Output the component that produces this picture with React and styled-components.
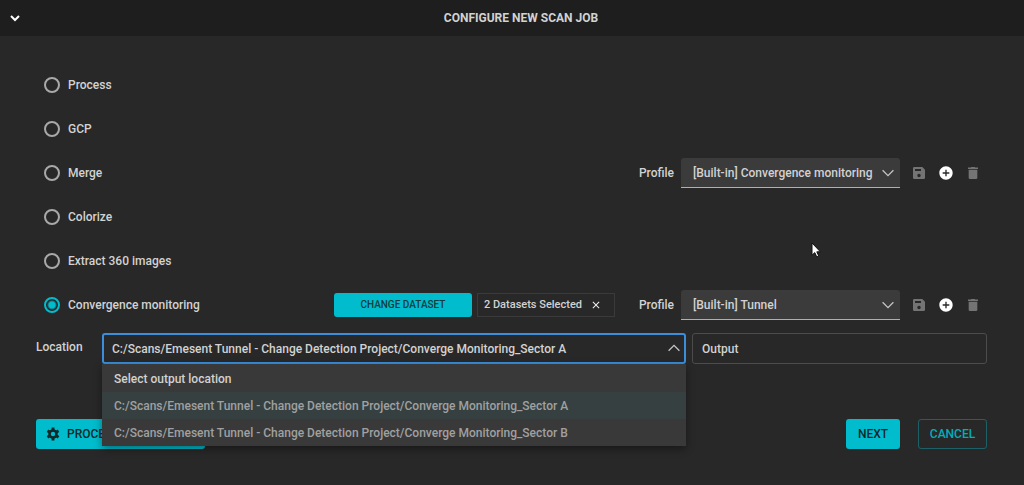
import React, { useState } from "react";
import styled, { createGlobalStyle } from "styled-components";
import { MdAddCircle, MdClose } from "react-icons/md";

const locations = [
	"Select output location",
	"C:/Scans/Emesent Tunnel - Change Detection Project/Converge Monitoring_Sector A",
	"C:/Scans/Emesent Tunnel - Change Detection Project/Converge Monitoring_Sector B",
];

const jobs = [
	{ id: "process", name: "Process" },
	{ id: "gcp", name: "GCP" },
	{ id: "merge", name: "Merge", profile: "[Built-in] Convergence monitoring" },
	{ id: "colorize", name: "Colorize" },
	{ id: "extract", name: "Extract 360 images" },
	{ id: "convergence", name: "Convergence monitoring", profile: "[Built-in] Tunnel", datasets: 2 },
];

const Chevron = ({ up }) => (
	<Arrow viewBox="0 0 12 8" aria-hidden="true">
		<path d={up ? "M.6 6.8 6 1.4l5.4 5.4" : "M.6 1.2 6 6.6l5.4-5.4"} />
	</Arrow>
);

const SaveIcon = () => (
	<svg viewBox="0 0 24 24" width="16" height="16" fill="currentColor">
		<path
			fillRule="evenodd"
			d="M17 3H5a2 2 0 0 0-2 2v14a2 2 0 0 0 2 2h14a2 2 0 0 0 2-2V7zM12 18.5a2.6 2.6 0 1 1 0-5.2 2.6 2.6 0 0 1 0 5.2zM15 9H6V6h9z"
		/>
	</svg>
);

const TrashIcon = () => (
	<svg viewBox="0 0 24 24" width="16" height="16" fill="currentColor">
		<path d="M5.5 19a2 2 0 0 0 2 2h9a2 2 0 0 0 2-2V7h-13zM19.5 3.8h-4L14.5 3h-5l-1 .8h-4V6h15z" />
	</svg>
);

const GearIcon = () => (
	<svg viewBox="0 0 24 24" width="14" height="14" fill="none" stroke="currentColor">
		<circle cx="12" cy="12" r="6" strokeWidth="4.4" />
		{[0, 60, 120].map((angle) => (
			<path
				key={angle}
				d="M12 1v4M12 19v4"
				strokeWidth="5"
				transform={`rotate(${angle} 12 12)`}
			/>
		))}
	</svg>
);

const Profile = ({ id, value }) => (
	<ProfileGroup>
		<label htmlFor={`profile-${id}`}>Profile</label>
		<SelectBox>
			<ProfileSelect id={`profile-${id}`} defaultValue={value}>
				<option>{value}</option>
			</ProfileSelect>
			<Chevron />
		</SelectBox>
		<Tools>
			<IconButton aria-label="Save profile" disabled><SaveIcon /></IconButton>
			<IconButton aria-label="Add profile"><MdAddCircle /></IconButton>
			<IconButton aria-label="Delete profile" disabled><TrashIcon /></IconButton>
		</Tools>
	</ProfileGroup>
);

const App = () => {
	const [job, setJob] = useState("convergence");
	const [location, setLocation] = useState(locations[1]);

	return (
		<>
			<GlobalStyle />
			<Header>
				<Collapse aria-label="Collapse">
					<svg viewBox="0 0 10 7" width="10" height="7">
						<path d="M1 1l4 4 4-4" fill="none" stroke="#fff" strokeWidth="2" />
					</svg>
				</Collapse>
				<h1>CONFIGURE NEW SCAN JOB</h1>
			</Header>
			<Content>
				{jobs.map((item) => (
					<Row key={item.id}>
						<RadioLabel>
							<Radio
								type="radio"
								name="job"
								checked={job === item.id}
								onChange={() => setJob(item.id)}
							/>
							{item.name}
						</RadioLabel>
						{item.datasets && (
							<Datasets>
								<DatasetButton>CHANGE DATASET</DatasetButton>
								<Chip>
									{item.datasets} Datasets Selected
									<ClearButton aria-label="Clear datasets"><MdClose /></ClearButton>
								</Chip>
							</Datasets>
						)}
						{item.profile && <Profile id={item.id} value={item.profile} />}
					</Row>
				))}
				<LocationRow>
					<LocationLabel htmlFor="location">Location</LocationLabel>
					<LocationBox>
						<LocationSelect
							id="location"
							value={location}
							onChange={(e) => setLocation(e.target.value)}
						>
							{locations.map((path) => <option key={path}>{path}</option>)}
						</LocationSelect>
						<Chevron up />
						<Menu role="listbox">
							{locations.map((path, i) => (
								<MenuItem
									key={path}
									role="option"
									aria-selected={path === location}
									$heading={i === 0}
									$active={path === location}
									onClick={() => setLocation(path)}
								>
									{path}
								</MenuItem>
							))}
						</Menu>
					</LocationBox>
					<Output aria-label="Output" placeholder="Output" />
				</LocationRow>
				<Footer>
					<SettingsButton><GearIcon />PROCESSING SETTINGS</SettingsButton>
					<NextButton>NEXT</NextButton>
					<CancelButton>CANCEL</CancelButton>
				</Footer>
			</Content>
			<Pointer viewBox="0 0 10 16" aria-hidden="true">
				<path
					d="M1 1v12.2l2.8-2.6 1.9 4.2 2-.9-1.9-4.1H9.4z"
					fill="#fff"
					stroke="#111"
					strokeWidth="1"
				/>
			</Pointer>
		</>
	);
};

export default App;

const GlobalStyle = createGlobalStyle`
* {
	box-sizing: border-box;
}
body {
	margin: 0;
	background: #282828;
	color: #d2d2d2;
	font: 500 12px/20px Roboto, "Liberation Sans", sans-serif;
}
button, input, select {
	font: inherit;
	color: inherit;
	margin: 0;
}
button {
	padding: 0;
	border: none;
	background: none;
	white-space: nowrap;
}
`;

const Header = styled.header`
	display: grid;
	grid-template-columns: 30px 1fr 12px;
	align-items: center;
	height: 36px;
	background: #1e1e1e;
	h1 {
		margin: 0;
		font-size: 12px;
		font-weight: 700;
		text-align: center;
	}
`;

const Collapse = styled.button`
	display: flex;
	justify-content: center;
`;

const Content = styled.main`
	padding: 27px 37px 36px 36px;
`;

const Row = styled.div`
	display: flex;
	align-items: center;
	height: 44px;
	padding-left: 8px;
`;

const RadioLabel = styled.label`
	display: flex;
	align-items: center;
	gap: 8px;
	margin-right: auto;
`;

const Radio = styled.input`
	appearance: none;
	width: 16px;
	height: 16px;
	margin: 0;
	border: 2px solid #a9a9a9;
	border-radius: 50%;
	&:checked {
		border-color: #00bccd;
		background: radial-gradient(circle, #00bccd 3px, transparent 5px);
	}
`;

const Datasets = styled.div`
	display: flex;
	gap: 5px;
	margin-right: 24px;
	font-size: 11px;
`;

const DatasetButton = styled.button`
	width: 138px;
	height: 24px;
	border-radius: 3px;
	background: #00bccd;
	color: #123c40;
	font-size: 10px;
`;

const Chip = styled.div`
	display: flex;
	align-items: center;
	justify-content: space-between;
	width: 138px;
	height: 24px;
	padding: 0 12px 0 6px;
	border: 1px solid #3a3a3a;
	white-space: nowrap;
`;

const ClearButton = styled.button`
	display: flex;
	font-size: 12px;
	color: #f0f0f0;
`;

const ProfileGroup = styled.div`
	display: flex;
	align-items: center;
	gap: 7px;
`;

const SelectBox = styled.div`
	position: relative;
	width: 219px;
`;

const Arrow = styled.svg`
	position: absolute;
	right: 6px;
	top: 11px;
	width: 12px;
	height: 8px;
	fill: none;
	stroke: #c4c4c4;
	stroke-width: 1.3;
	pointer-events: none;
`;

const ProfileSelect = styled.select`
	appearance: none;
	display: block;
	width: 100%;
	height: 30px;
	padding: 0 20px 0 12px;
	border: none;
	border-bottom: 1px solid #b0b0b0;
	border-radius: 3px 3px 0 0;
	background: #3b3b3b;
`;

const Tools = styled.div`
	display: flex;
	gap: 11px;
	margin: 0 6px 0 4px;
`;

const IconButton = styled.button`
	display: flex;
	font-size: 16px;
	color: ${({ disabled }) => (disabled ? "#747474" : "#fff")};
`;

const LocationRow = styled.div`
	display: grid;
	grid-template-columns: 60px 99fr 50fr;
	align-items: start;
	gap: 6px;
	margin-top: 6px;
`;

const LocationLabel = styled.label`
	line-height: 28px;
`;

const LocationBox = styled.div`
	position: relative;
`;

const LocationSelect = styled.select`
	appearance: none;
	display: block;
	width: 100%;
	height: 31px;
	padding: 0 24px 0 8px;
	border: 2px solid #3a8edb;
	border-radius: 3px;
	background: #282828;
`;

const Menu = styled.ul`
	position: absolute;
	z-index: 1;
	top: 100%;
	left: 0;
	right: 0;
	margin: 0;
	padding: 1px 0 0;
	list-style: none;
	background: #393939;
	box-shadow: 0 3px 8px rgba(0, 0, 0, 0.4);
`;

const MenuItem = styled.li`
	height: 27px;
	padding: 0 12px;
	line-height: 28px;
	white-space: nowrap;
	color: ${({ $heading }) => ($heading ? "#d2d2d2" : "#a0a0a0")};
	background: ${({ $active }) => ($active ? "#364040" : "transparent")};
`;

const Output = styled.input`
	width: 100%;
	height: 31px;
	padding: 0 9px;
	border: 1px solid #4c4c4c;
	border-radius: 3px;
	background: transparent;
	&::placeholder {
		color: #d2d2d2;
		opacity: 1;
	}
`;

const Footer = styled.footer`
	display: flex;
	gap: 18px;
	margin-top: 55px;
`;

const FooterButton = styled.button`
	height: 30px;
	border-radius: 3px;
	background: #00bccd;
	color: #10282a;
`;

const SettingsButton = styled(FooterButton)`
	display: flex;
	align-items: center;
	gap: 7px;
	width: 169px;
	margin-right: auto;
	padding-left: 10px;
	svg {
		flex: none;
	}
`;

const NextButton = styled(FooterButton)`
	width: 54px;
`;

const CancelButton = styled(FooterButton)`
	width: 69px;
	border: 1px solid #1d6067;
	background: transparent;
	color: #00aebd;
`;

const Pointer = styled.svg`
	position: absolute;
	left: 811px;
	top: 242px;
	width: 10px;
	height: 16px;
	pointer-events: none;
`;
